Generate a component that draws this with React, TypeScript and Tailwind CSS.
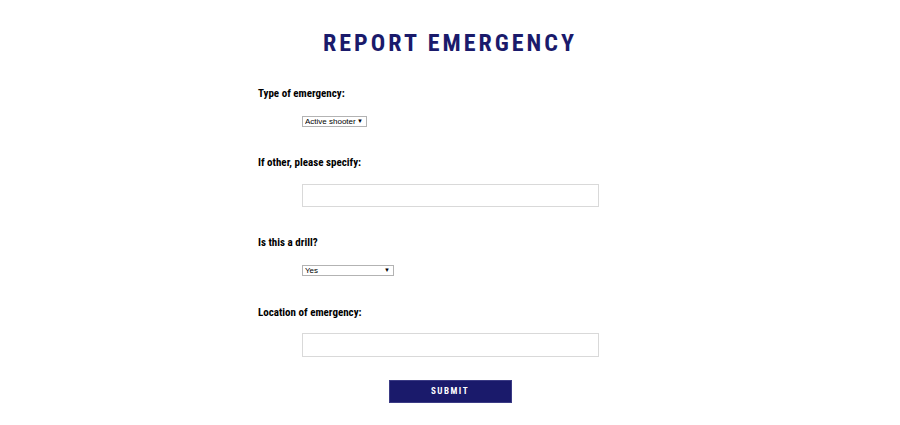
import React from "react";

const condensed =
  "[font-family:'Roboto_Condensed','Liberation_Sans_Narrow','DejaVu_Sans_Condensed',Roboto,sans-serif] [font-stretch:condensed]";

const labelCls = `block text-[11px] leading-[14px] font-bold text-black ${condensed}`;

function Select({ value, options, width }: { value: string; options: string[]; width: string }) {
  return (
    <div className={`relative ${width} h-[11px]`}>
      <select
        defaultValue={value}
        className="block appearance-none w-full h-[11px] border border-[#b3b3b3] bg-white text-[8px] leading-[9px] py-0 pl-[2px] pr-[10px] text-black [font-family:'Liberation_Sans',Arial,sans-serif] outline-none"
      >
        {options.map((o) => (
          <option key={o}>{o}</option>
        ))}
      </select>
      <span className="pointer-events-none absolute right-[4px] top-[1px] text-[6px] leading-[9px] text-black">▼</span>
    </div>
  );
}

export default function App() {
  return (
    <div className="w-[900px] h-[425px] bg-white overflow-hidden">
      <h1 className={`pt-[29px] text-center text-[24px] leading-[28px] font-bold tracking-[3px] text-[#1a1a6b] ${condensed}`}>
        REPORT EMERGENCY
      </h1>
      <form className="mx-auto w-[384px] mt-[30px]" onSubmit={(e) => e.preventDefault()}>
        <label className={labelCls}>Type of emergency:</label>
        <div className="mt-[15px] ml-[44px]">
          <Select value="Active shooter" options={["Active shooter", "Fire", "Medical", "Other"]} width="w-[65px]" />
        </div>

        <label className={`${labelCls} mt-[29px]`}>If other, please specify:</label>
        <input
          type="text"
          className="block mt-[14px] ml-[44px] w-[297px] h-[23px] border border-[#d9d9d9] bg-white outline-none"
        />

        <label className={`${labelCls} mt-[29px]`}>Is this a drill?</label>
        <div className="mt-[15px] ml-[44px]">
          <Select value="Yes" options={["Yes", "No"]} width="w-[92px]" />
        </div>

        <label className={`${labelCls} mt-[30px]`}>Location of emergency:</label>
        <input
          type="text"
          className="block mt-[13px] ml-[44px] w-[297px] h-[24px] border border-[#d9d9d9] bg-white outline-none"
        />

        <div className="flex justify-center mt-[23px]">
          <button
            type="submit"
            className={`w-[123px] h-[23px] bg-[#1a1a6b] border border-[#3b3b85] text-white text-[9px] font-bold tracking-[1.5px] ${condensed}`}
          >
            SUBMIT
          </button>
        </div>
      </form>
    </div>
  );
}
